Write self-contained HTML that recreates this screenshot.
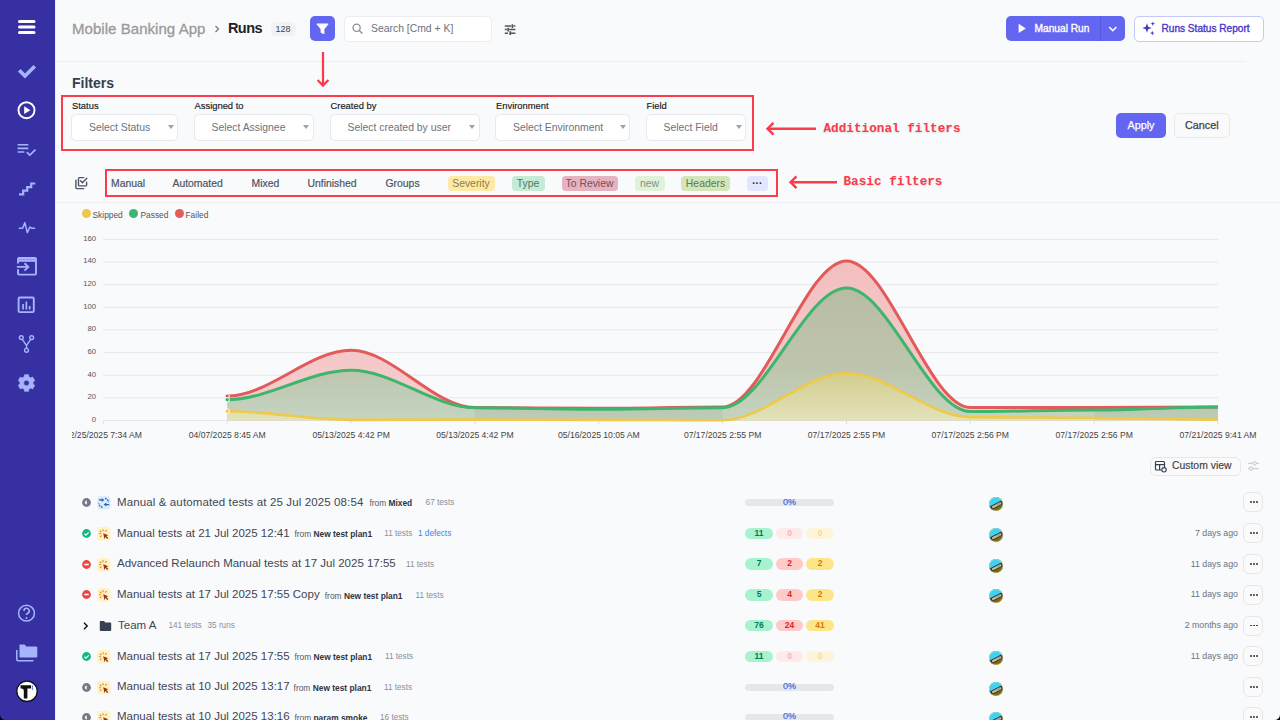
<!DOCTYPE html>
<html><head><meta charset="utf-8">
<style>
*{box-sizing:border-box;margin:0;padding:0}
html,body{width:1280px;height:720px;overflow:hidden;background:#f9fafb;font-family:"Liberation Sans",sans-serif;color:#374151}
.a{position:absolute}
.nw{white-space:nowrap}
#sb{left:0;top:0;width:56px;height:720px;background:#3730a3;border-right:1px solid #eef0fb}
#sb svg{position:absolute}
.hdrline{left:55px;top:61px;width:1191px;height:1px;background:#eceef1}
.sel{background:#fff;border:1px solid #e8e9ec;border-radius:5px;height:26px}
.sel span{position:absolute;left:16.6px;top:7.3px;font-size:10.4px;color:#6b7280;white-space:nowrap}
.sel i{position:absolute;right:3.6px;top:10.6px;width:0;height:0;border-left:3.3px solid transparent;border-right:3.3px solid transparent;border-top:4.6px solid #9ca3af}
.lbl{font-size:9.4px;color:#16181c;top:100px;-webkit-text-stroke:.15px #16181c}
.redbox{border:2.3px solid #fb3a4c}
.tab{font-size:10.4px;color:#4b5563;top:177.5px;-webkit-text-stroke:.2px #4b5563;white-space:nowrap}
.pill{top:175.5px;height:15px;border-radius:4px;font-size:10.4px;line-height:15px;text-align:center;white-space:nowrap}
.ann{font-family:"Liberation Mono",monospace;font-weight:bold;font-size:12.7px;color:#fb3a4c;white-space:nowrap;text-shadow:0 1px 2px rgba(0,0,0,.12)}
.ylab{font-size:7.7px;color:#555;text-align:right;width:30px;left:66px}
.xlab{font-size:8.6px;color:#444;white-space:nowrap;top:5px;text-align:center;width:120px}
.row{left:0;width:1280px;height:30px}
.title{font-size:11.5px;color:#3f4654;white-space:nowrap}
.from{font-size:8.4px;color:#555b66;white-space:nowrap}
.from b{color:#2f3542}
.cnt{font-size:8.2px;color:#8a8f98;white-space:nowrap}
.ago{font-size:8.8px;color:#6b7280;white-space:nowrap;text-align:right;width:100px;left:1138px}
.dots{left:1243px;width:20px;height:20px;border:1px solid #e6e7ea;border-radius:6px;background:#fafafa}
.dots:after{content:"";position:absolute;left:6px;top:8.2px;width:1.8px;height:1.8px;background:#333;border-radius:1px;box-shadow:3px 0 0 #333,6px 0 0 #333}
.prog{left:745px;width:89px;height:7px;border-radius:4px;background:#e5e7eb}
.prog span{position:absolute;left:0;width:100%;top:-1.2px;text-align:center;font-size:9px;color:#4a6fe0;line-height:9px;-webkit-text-stroke:.25px #4a6fe0}
.st{left:745px;width:89px;height:11.5px}
.st div{position:absolute;top:0;height:11.5px;border-radius:6px;font-size:8.5px;font-weight:bold;line-height:11.5px;text-align:center}
.st .g{left:0;width:28px;background:#a7f3d0;color:#047857}
.st .r{left:31px;width:27px;background:#fecaca;color:#dc2626}
.st .y{left:61px;width:28px;background:#fde68a;color:#d97706}
.st .rz{left:31px;width:27px;background:#fdeaea;color:#f9b4b4}
.st .yz{left:61px;width:28px;background:#fcf5d9;color:#f6d7a0}
</style></head><body>
<!-- SIDEBAR -->
<div id="sb" class="a">
<svg class="a" style="left:0;top:0" width="55" height="720" viewBox="0 0 55 720">
<g fill="none" stroke="#fff" stroke-width="3" stroke-linecap="round">
<path d="M19.5 21.5H34M19.5 27H34M19.5 32.5H34"/>
</g>
<path d="M20.5 71.5l4.5 4.5 8.5-8.5" fill="none" stroke="#a5b4fc" stroke-width="3.6" stroke-linecap="square"/>
<circle cx="26.5" cy="110.2" r="8" fill="none" stroke="#fff" stroke-width="1.9"/>
<path d="M24.2 106.3v7.8l6.2-3.9z" fill="#fff"/>
<g fill="none" stroke="#a5b4fc" stroke-width="1.6">
<path d="M17.6 144.8h10.7M17.6 148.4h10.7M17.6 152h6.8"/>
<path d="M26.8 152.2l3 2.8 5.7-5.4" stroke-width="1.7"/>
</g>
<path d="M19 194.3h4.2v-3.6h4v-3.6h4v-3.6h4" fill="none" stroke="#a5b4fc" stroke-width="2.2"/>
<path d="M18.8 228.2h3.8l2.3-5.6 2.4 10 2.6-5.6 1.8 1.2h3.4" fill="none" stroke="#a5b4fc" stroke-width="1.5" stroke-linejoin="round"/>
<g fill="none" stroke="#a5b4fc" stroke-width="1.9">
<path d="M18 263.5v-4.5q0-1 1-1h16q1 0 1 1v14.6q0 1-1 1H19q-1 0-1-1v-4.3"/>
<path d="M18 260.5h18" stroke-width="2.6"/>
<path d="M16.9 266.9h11M24.5 263.2l3.8 3.7-3.8 3.7"/>
<rect x="18.6" y="297.5" width="15.2" height="14.6" rx="1.2"/>
</g>
<g fill="#a5b4fc"><rect x="22.2" y="304" width="1.7" height="5.5"/><rect x="25.5" y="301.5" width="1.7" height="8"/><rect x="28.8" y="306" width="1.7" height="3.5"/></g>
<g fill="none" stroke="#a5b4fc" stroke-width="1.4">
<circle cx="21.3" cy="337.6" r="1.9"/><circle cx="31.7" cy="337.6" r="1.9"/><circle cx="26.5" cy="350.3" r="1.9"/>
<path d="M22.3 339.3l4.2 6.2 4.2-6.2M26.5 345.5v2.9"/>
</g>
<path fill="#a5b4fc" fill-rule="evenodd" stroke="#a5b4fc" stroke-width=".6" stroke-linejoin="round" d="M24.24 376.80L24.42 374.66L28.58 374.66L28.76 376.80A6.6 6.6 0 0 1 30.74 377.94L32.69 377.03L34.77 380.63L33.00 381.85A6.6 6.6 0 0 1 33.00 384.15L34.77 385.37L32.69 388.97L30.74 388.06A6.6 6.6 0 0 1 28.76 389.20L28.58 391.34L24.42 391.34L24.24 389.20A6.6 6.6 0 0 1 22.26 388.06L20.31 388.97L18.23 385.37L20.00 384.15A6.6 6.6 0 0 1 20.00 381.85L18.23 380.63L20.31 377.03L22.26 377.94A6.6 6.6 0 0 1 24.24 376.80Z M29.3 383.0A2.8 2.8 0 1 0 23.7 383.0A2.8 2.8 0 1 0 29.3 383.0Z"/>
<circle cx="26.5" cy="613.2" r="7.9" fill="none" stroke="#a5b4fc" stroke-width="1.5"/>
<path d="M24 611a2.6 2.6 0 1 1 3.6 2.3c-.8.4-1.1.9-1.1 1.8" fill="none" stroke="#a5b4fc" stroke-width="1.6"/>
<circle cx="26.5" cy="618" r="1" fill="#a5b4fc"/>
<path d="M19.5 644.5h5l1.8 2h10q1 0 1 1v9q0 1-1 1H20.5q-1 0-1-1z" fill="#a5b4fc"/>
<path d="M16.8 650v9.5q0 1.2 1.2 1.2h15.5" fill="none" stroke="#a5b4fc" stroke-width="1.5"/>
<circle cx="27" cy="691.3" r="10.2" fill="#fff" stroke="#111" stroke-width="1.3"/>
<path d="M20.5 685.2h10.5v3.2h-3.6v10h-3.6v-7.6q0-2.4-2.4-2.4h-.9z" fill="#111"/>
<rect x="31.8" y="685.2" width="1.2" height="4.8" fill="#5b8def"/>
</svg>
</div>
<div class="a hdrline"></div>
<!-- HEADER -->
<div class="a nw" style="left:72px;top:19.5px;font-size:15px;color:#999;letter-spacing:.05px;-webkit-text-stroke:.3px #999">Mobile Banking App</div>
<svg class="a" style="left:213px;top:24px" width="8" height="10"><path d="M2.5 2l3 3-3 3" fill="none" stroke="#777" stroke-width="1.2"/></svg>
<div class="a nw" style="left:228px;top:19.5px;font-size:14.5px;font-weight:bold;color:#1f2125;letter-spacing:-.6px">Runs</div>
<div class="a" style="left:270.5px;top:21.5px;width:25px;height:14px;border-radius:5px;background:#f1f2f4;font-size:9px;color:#3b4350;text-align:center;line-height:14px">128</div>
<div class="a" style="left:309.5px;top:16px;width:25px;height:25px;border-radius:5px;background:#6366f1"></div>
<svg class="a" style="left:309.5px;top:16px" width="25" height="25"><path d="M7.2 8.2h10.6l-4 4.6v4.6l-2.6-1.2v-3.4z" fill="#fff" stroke="#fff" stroke-width="1.2" stroke-linejoin="round"/></svg>
<div class="a" style="left:343.5px;top:15.5px;width:148px;height:26px;border-radius:5px;background:#fff;border:1px solid #ecedf0"></div>
<svg class="a" style="left:350px;top:21px" width="16" height="16"><circle cx="6.6" cy="6.8" r="3.6" fill="none" stroke="#8b919b" stroke-width="1.3"/><path d="M9.3 9.5l3 3" stroke="#8b919b" stroke-width="1.4"/></svg>
<div class="a nw" style="left:371px;top:23px;font-size:10.4px;color:#6b7280">Search [Cmd + K]</div>
<svg class="a" style="left:503px;top:22px" width="16" height="14"><g stroke="#4b5563" stroke-width="1.5"><path d="M1.8 4.1h6.4M10.6 4.1h1.8M1.8 7.6h2M6.2 7.6h6.2M1.8 11.2h3.2M8 11.2h4.4"/><path d="M9.4 2.2v3.8M5.1 5.7v3.8M7.2 9.3v3.8" stroke-width="1.7"/></g></svg>

<div class="a" style="left:1006px;top:16px;width:119px;height:25px;border-radius:5px;background:#6366f1"></div>
<div class="a" style="left:1099.5px;top:16px;width:1px;height:25px;background:#5659e0"></div>
<svg class="a" style="left:1016px;top:22px" width="12" height="14"><path d="M2.6 1.8v9.2l7.2-4.6z" fill="#fff"/></svg>
<div class="a nw" style="left:1034.5px;top:23.2px;font-size:10.2px;color:#fff;-webkit-text-stroke:.35px #fff">Manual Run</div>
<svg class="a" style="left:1106px;top:24px" width="14" height="10"><path d="M3.2 3l3.6 3.6 3.6-3.6" fill="none" stroke="#fff" stroke-width="1.5"/></svg>
<div class="a" style="left:1133.5px;top:16px;width:130px;height:25.5px;border-radius:5px;background:#fff;border:1px solid #c5c9f6"></div>
<svg class="a" style="left:1140px;top:20px" width="17" height="17"><g fill="#4338ca"><path d="M7 3.2l1.2 3.5 3.5 1.3-3.5 1.2L7 12.7 5.8 9.2 2.3 8l3.5-1.3z"/><path d="M12.8 1.5l.6 1.6 1.6.6-1.6.6-.6 1.6-.6-1.6-1.6-.6 1.6-.6z"/><path d="M12.3 10.8l.6 1.7 1.7.6-1.7.6-.6 1.7-.6-1.7-1.7-.6 1.7-.6z"/></g></svg>
<div class="a nw" style="left:1161.5px;top:23.3px;font-size:10.1px;color:#4338ca;-webkit-text-stroke:.35px #4338ca">Runs Status Report</div>

<!-- FILTERS -->
<svg class="a" style="left:311.3px;top:50px" width="24" height="40"><path d="M12 2v34" stroke="#fb3a4c" stroke-width="2.2"/><path d="M6.6 30l5.4 5.6 5.4-5.6" fill="none" stroke="#fb3a4c" stroke-width="2.2"/></svg>
<div class="a nw" style="left:72px;top:75px;font-size:14px;font-weight:bold;color:#344050">Filters</div>
<div class="a redbox" style="left:61px;top:95.2px;width:692.5px;height:56.2px"></div>
<div class="a lbl nw" style="left:72px">Status</div>
<div class="a lbl nw" style="left:194.5px">Assigned to</div>
<div class="a lbl nw" style="left:330.5px">Created by</div>
<div class="a lbl nw" style="left:496px">Environment</div>
<div class="a lbl nw" style="left:646.5px">Field</div>
<div class="a sel" style="left:71.4px;top:113.9px;width:106.8px;height:27px"><span>Select Status</span><i></i></div>
<div class="a sel" style="left:193.9px;top:113.9px;width:119.8px;height:27px"><span>Select Assignee</span><i></i></div>
<div class="a sel" style="left:329.9px;top:113.9px;width:149.8px;height:27px"><span>Select created by user</span><i></i></div>
<div class="a sel" style="left:495.4px;top:113.9px;width:134.8px;height:27px"><span>Select Environment</span><i></i></div>
<div class="a sel" style="left:645.9px;top:113.9px;width:100.3px;height:27px"><span>Select Field</span><i></i></div>
<svg class="a" style="left:762px;top:118px" width="58" height="22"><path d="M6 10.7h48" stroke="#fb3a4c" stroke-width="2.4"/><path d="M11.5 4.8L5.5 10.7l6 6" fill="none" stroke="#fb3a4c" stroke-width="2.4"/></svg>
<div class="a ann" style="left:823.5px;top:120.5px">Additional filters</div>
<div class="a" style="left:1116px;top:113px;width:50px;height:25px;border-radius:5px;background:#6366f1;color:#fff;font-size:10.8px;text-align:center;line-height:25px;-webkit-text-stroke:.25px #fff">Apply</div>
<div class="a" style="left:1174px;top:113px;width:55.5px;height:25px;border-radius:5px;background:#fafafa;border:1px solid #e8e9ec;color:#404246;font-size:10.8px;text-align:center;line-height:23.5px;-webkit-text-stroke:.25px #404246">Cancel</div>

<!-- BASIC FILTERS -->
<svg class="a" style="left:73px;top:174px" width="17" height="17"><g fill="none" stroke="#4b5563" stroke-width="1.4" stroke-linecap="round"><path d="M2.9 6.3v7.3q0 1 1 1h6.8"/><path d="M10.7 3.6H6.5q-1 0-1 1v6.3q0 1 1 1h6.1q1 0 1-1V8.3"/><path d="M7.5 6.7l2 2.1 4.3-4.6"/></g></svg>
<div class="a redbox" style="left:104.5px;top:169.3px;width:673px;height:27.3px"></div>
<div class="a tab" style="left:111px">Manual</div>
<div class="a tab" style="left:172.5px">Automated</div>
<div class="a tab" style="left:251.5px">Mixed</div>
<div class="a tab" style="left:307.5px">Unfinished</div>
<div class="a tab" style="left:385.5px">Groups</div>
<div class="a pill" style="left:447.5px;width:47px;background:#fde9a8;color:#8f7d3c">Severity</div>
<div class="a pill" style="left:511.5px;width:33px;background:#c5ead6;color:#4f7a62">Type</div>
<div class="a pill" style="left:561.5px;width:56px;background:#e6b3c0;color:#7a4d58">To Review</div>
<div class="a pill" style="left:634.5px;width:30px;background:#e0f2da;color:#7c967c">new</div>
<div class="a pill" style="left:681px;width:49px;background:#d3e6b9;color:#5d7750">Headers</div>
<div class="a pill" style="left:746.5px;width:21.5px;height:15.5px;background:#e0e7ff;color:#222;font-size:10px;line-height:15px;font-weight:bold">&middot;&middot;&middot;</div>
<svg class="a" style="left:785px;top:172px" width="58" height="22"><path d="M6 10.2h46" stroke="#fb3a4c" stroke-width="2.4"/><path d="M11.5 4.3L5.5 10.2l6 6" fill="none" stroke="#fb3a4c" stroke-width="2.4"/></svg>
<div class="a ann" style="left:843.5px;top:174.3px">Basic filters</div>
<div class="a" style="left:55px;top:202px;width:1225px;height:1px;background:#eff0f2"></div>


<!-- LEGEND -->
<div class="a" style="left:81.8px;top:208.9px;width:9px;height:9px;border-radius:50%;background:#ecc94b"></div>
<div class="a nw" style="left:92.5px;top:210px;font-size:8.4px;color:#555">Skipped</div>
<div class="a" style="left:129.4px;top:208.9px;width:9px;height:9px;border-radius:50%;background:#3fb46f"></div>
<div class="a nw" style="left:140.5px;top:210px;font-size:8.4px;color:#555">Passed</div>
<div class="a" style="left:174.8px;top:208.9px;width:9px;height:9px;border-radius:50%;background:#e15d5d"></div>
<div class="a nw" style="left:185.5px;top:210px;font-size:8.4px;color:#555">Failed</div>
<!-- CHART -->
<svg class="a" style="left:0;top:0" width="1280" height="450">
<defs>
<linearGradient id="gr" x1="0" y1="255" x2="0" y2="420" gradientUnits="userSpaceOnUse"><stop offset="0" stop-color="#f2b6b6"/><stop offset="1" stop-color="#f4c8c8"/></linearGradient>
<linearGradient id="gg" x1="0" y1="285" x2="0" y2="420" gradientUnits="userSpaceOnUse"><stop offset="0" stop-color="#b3bba1"/><stop offset=".62" stop-color="#b8c4aa"/><stop offset="1" stop-color="#bfd5bf"/></linearGradient>
<linearGradient id="gy" x1="0" y1="372" x2="0" y2="420" gradientUnits="userSpaceOnUse"><stop offset="0" stop-color="#d5cd89"/><stop offset="1" stop-color="#e6e3b9"/></linearGradient>
<clipPath id="cl"><rect x="72" y="200" width="1200" height="240"/></clipPath>
</defs>
<path d="M103.4 420.5H1218" stroke="#e6e7ea" stroke-width="1"/><path d="M103.4 397.9H1218" stroke="#e6e7ea" stroke-width="1"/><path d="M103.4 375.2H1218" stroke="#e6e7ea" stroke-width="1"/><path d="M103.4 352.6H1218" stroke="#e6e7ea" stroke-width="1"/><path d="M103.4 329.9H1218" stroke="#e6e7ea" stroke-width="1"/><path d="M103.4 307.3H1218" stroke="#e6e7ea" stroke-width="1"/><path d="M103.4 284.7H1218" stroke="#e6e7ea" stroke-width="1"/><path d="M103.4 262.0H1218" stroke="#e6e7ea" stroke-width="1"/><path d="M103.4 239.4H1218" stroke="#e6e7ea" stroke-width="1"/><path d="M103.4 420.5V424.5" stroke="#e0e1e4" stroke-width="1"/><path d="M227.2 420.5V424.5" stroke="#e0e1e4" stroke-width="1"/><path d="M351.1 420.5V424.5" stroke="#e0e1e4" stroke-width="1"/><path d="M474.9 420.5V424.5" stroke="#e0e1e4" stroke-width="1"/><path d="M598.8 420.5V424.5" stroke="#e0e1e4" stroke-width="1"/><path d="M722.6 420.5V424.5" stroke="#e0e1e4" stroke-width="1"/><path d="M846.5 420.5V424.5" stroke="#e0e1e4" stroke-width="1"/><path d="M970.3 420.5V424.5" stroke="#e0e1e4" stroke-width="1"/><path d="M1094.2 420.5V424.5" stroke="#e0e1e4" stroke-width="1"/><path d="M1218.0 420.5V424.5" stroke="#e0e1e4" stroke-width="1"/>
<path d="M227.2,396.1 C268.5,396.1 309.8,350.3 351.1,350.3 C392.4,350.3 433.7,407.5 474.9,407.5 C516.2,407.5 557.5,408.3 598.8,408.3 C640.1,408.3 681.4,407.1 722.6,407.1 C763.9,407.1 805.2,260.9 846.5,260.9 C887.8,260.9 929.1,407.5 970.3,407.5 C1011.6,407.5 1052.9,407.5 1094.2,407.5 C1135.5,407.5 1176.8,406.9 1218.0,406.9 L1218.0,420.5 L227.2,420.5 Z" fill="url(#gr)" fill-opacity=".88"/>
<path d="M227.2,399.7 C268.5,399.7 309.8,370.2 351.1,370.2 C392.4,370.2 433.7,407.7 474.9,407.7 C516.2,407.7 557.5,409.2 598.8,409.2 C640.1,409.2 681.4,407.7 722.6,407.7 C763.9,407.7 805.2,288.1 846.5,288.1 C887.8,288.1 929.1,411.6 970.3,411.6 C1011.6,411.6 1052.9,410.1 1094.2,410.1 C1135.5,410.1 1176.8,407.1 1218.0,407.1 L1218.0,420.5 L227.2,420.5 Z" fill="url(#gg)" fill-opacity=".9"/>
<path d="M227.2,411.2 C268.5,411.2 309.8,419.9 351.1,419.9 C392.4,419.9 433.7,419.6 474.9,419.6 C516.2,419.6 557.5,419.9 598.8,419.9 C640.1,419.9 681.4,420.2 722.6,420.2 C763.9,420.2 805.2,373.2 846.5,373.2 C887.8,373.2 929.1,417.1 970.3,417.1 C1011.6,417.1 1052.9,418.0 1094.2,418.0 C1135.5,418.0 1176.8,419.6 1218.0,419.6 L1218.0,420.5 L227.2,420.5 Z" fill="url(#gy)" fill-opacity=".9"/>
<clipPath id="gcl"><path d="M227.2,399.7 C268.5,399.7 309.8,370.2 351.1,370.2 C392.4,370.2 433.7,407.7 474.9,407.7 C516.2,407.7 557.5,409.2 598.8,409.2 C640.1,409.2 681.4,407.7 722.6,407.7 C763.9,407.7 805.2,288.1 846.5,288.1 C887.8,288.1 929.1,411.6 970.3,411.6 C1011.6,411.6 1052.9,410.1 1094.2,410.1 C1135.5,410.1 1176.8,407.1 1218.0,407.1 L1218.0,420.5 L227.2,420.5 Z"/></clipPath><g clip-path="url(#gcl)"><path d="M474.9 400H722.6V420.5H474.9Z M1094.2 400H1218V420.5H1094.2Z" fill="#6b6b50" fill-opacity=".08"/></g>

<path d="M227.2,396.1 C268.5,396.1 309.8,350.3 351.1,350.3 C392.4,350.3 433.7,407.5 474.9,407.5 C516.2,407.5 557.5,408.3 598.8,408.3 C640.1,408.3 681.4,407.1 722.6,407.1 C763.9,407.1 805.2,260.9 846.5,260.9 C887.8,260.9 929.1,407.5 970.3,407.5 C1011.6,407.5 1052.9,407.5 1094.2,407.5 C1135.5,407.5 1176.8,406.9 1218.0,406.9" fill="none" stroke="#e35a5a" stroke-width="3"/>
<path d="M227.2,399.7 C268.5,399.7 309.8,370.2 351.1,370.2 C392.4,370.2 433.7,407.7 474.9,407.7 C516.2,407.7 557.5,409.2 598.8,409.2 C640.1,409.2 681.4,407.7 722.6,407.7 C763.9,407.7 805.2,288.1 846.5,288.1 C887.8,288.1 929.1,411.6 970.3,411.6 C1011.6,411.6 1052.9,410.1 1094.2,410.1 C1135.5,410.1 1176.8,407.1 1218.0,407.1" fill="none" stroke="#3db56d" stroke-width="3"/>
<path d="M227.2,411.2 C268.5,411.2 309.8,419.9 351.1,419.9 C392.4,419.9 433.7,419.6 474.9,419.6 C516.2,419.6 557.5,419.9 598.8,419.9 C640.1,419.9 681.4,420.2 722.6,420.2 C763.9,420.2 805.2,373.2 846.5,373.2 C887.8,373.2 929.1,417.1 970.3,417.1 C1011.6,417.1 1052.9,418.0 1094.2,418.0 C1135.5,418.0 1176.8,419.6 1218.0,419.6" fill="none" stroke="#efc94a" stroke-width="2.6"/>
<circle cx="227.2" cy="396.1" r="2.2" fill="#e15757" stroke="#fff" stroke-width="1"/>
<circle cx="227.2" cy="399.7" r="2.2" fill="#3cb46c" stroke="#fff" stroke-width="1"/>
<circle cx="227.2" cy="411.2" r="2.2" fill="#efc94a" stroke="#fff" stroke-width="1"/>
</svg>
<div class="a ylab" style="top:414.9px">0</div><div class="a ylab" style="top:392.3px">20</div><div class="a ylab" style="top:369.6px">40</div><div class="a ylab" style="top:347.0px">60</div><div class="a ylab" style="top:324.3px">80</div><div class="a ylab" style="top:301.7px">100</div><div class="a ylab" style="top:279.1px">120</div><div class="a ylab" style="top:256.4px">140</div><div class="a ylab" style="top:233.8px">160</div>
<div class="a" style="left:72px;top:425px;width:1200px;height:20px;overflow:hidden">
<div class="a" style="left:-72px;top:0;width:1300px;height:20px"><div class="a xlab" style="left:43.4px">02/25/2025 7:34 AM</div><div class="a xlab" style="left:167.2px">04/07/2025 8:45 AM</div><div class="a xlab" style="left:291.1px">05/13/2025 4:42 PM</div><div class="a xlab" style="left:414.9px">05/13/2025 4:42 PM</div><div class="a xlab" style="left:538.8px">05/16/2025 10:05 AM</div><div class="a xlab" style="left:662.6px">07/17/2025 2:55 PM</div><div class="a xlab" style="left:786.5px">07/17/2025 2:55 PM</div><div class="a xlab" style="left:910.3px">07/17/2025 2:56 PM</div><div class="a xlab" style="left:1034.2px">07/17/2025 2:56 PM</div><div class="a xlab" style="left:1158.0px">07/21/2025 9:41 AM</div></div>
</div>


<!-- LIST -->
<div class="a" style="left:1149.5px;top:456.5px;width:91px;height:19.5px;border-radius:6px;border:1px solid #e6e7ea;background:#fafafa"></div>
<svg class="a" style="left:1154px;top:460px" width="13" height="13"><g fill="none" stroke="#374151" stroke-width="1.2"><rect x="1.5" y="1.5" width="9" height="8.5" rx="1"/><path d="M1.5 4.6h9M5.6 4.6v5.4"/></g><circle cx="10" cy="9.8" r="2.2" fill="#fafafa" stroke="#374151" stroke-width="1.1"/></svg>
<div class="a nw" style="left:1172px;top:460.3px;font-size:10.4px;color:#3f4146;-webkit-text-stroke:.15px #3f4146">Custom view</div>
<svg class="a" style="left:1247px;top:460px" width="12" height="12"><g fill="none" stroke="#c4c6cc" stroke-width="1"><path d="M1 3.3h11M1 8.6h11"/><circle cx="7.6" cy="3.3" r="1.7" fill="#f9fafb"/><circle cx="4.2" cy="8.6" r="1.7" fill="#f9fafb"/></g></svg>
<svg class="a" style="left:81px;top:496.7px" width="11" height="11"><circle cx="5.5" cy="5.5" r="4.4" fill="#747a86"/><path d="M5.9 3.4a2.1 2.1 0 0 0 0 4.2z" fill="#eef0f3"/></svg><svg class="a" style="left:97px;top:495.7px" width="14" height="14"><rect x="0" y="0" width="13.5" height="13.5" rx="3.2" fill="#dcecfd"/><g fill="none" stroke="#2a64b8" stroke-width="1.3"><path d="M1.9 3.9h3.6M12.2 8.6H8.6"/><path d="M8 2.3a4.6 4.6 0 0 1 3.6 4" stroke-dasharray="1.7 .8"/><path d="M5.5 11.3a4.6 4.6 0 0 1-3.6-4" stroke-dasharray="1.7 .8"/></g><path d="M7.4 3.9L4.6 1.9v4z M6.6 8.6l2.8-2v4z" fill="#2a64b8"/></svg><div class="a title" style="left:117px;top:495.5px;letter-spacing:.12px">Manual &amp; automated tests at 25 Jul 2025 08:54</div><div class="a from" style="left:369.4px;top:498.0px">from <b>Mixed</b></div><div class="a prog" style="top:498.7px"><span>0%</span></div><svg class="a" style="left:989px;top:496.7px" width="14" height="14"><defs><clipPath id="avc503"><circle cx="7" cy="7" r="7"/></clipPath></defs><g clip-path="url(#avc503)"><rect width="14" height="14" fill="#7a6d00"/><path d="M0 0h14v3.5L0 10z" fill="#3fd3f0"/><path d="M.8 9.4L12.2 3.6l1.9 3.6L2.6 13z" fill="#2e2e2e"/><path d="M2.6 9.5l8.9-4.5 1.1 2.1-8.9 4.5z" fill="#cdb99c"/><path d="M7.5 7l2.8-1.4 1 2-2.8 1.4z" fill="#7aa6d8"/></g><circle cx="7" cy="7" r="6.6" fill="none" stroke="#fff" stroke-opacity=".35" stroke-width=".8"/></svg><div class="a dots" style="top:492.2px"></div><svg class="a" style="left:81px;top:527.7px" width="11" height="11"><circle cx="5.5" cy="5.5" r="4.4" fill="#10b981"/><path d="M3.4 5.6l1.5 1.5 2.8-2.8" fill="none" stroke="#fff" stroke-width="1.2"/></svg><svg class="a" style="left:97px;top:526.7px" width="14" height="14"><rect x="0" y="0" width="13.5" height="13.5" rx="3" fill="#fef3c7"/><g stroke="#ea7a12" stroke-width="1.1" stroke-linecap="round"><path d="M6 2.6v1.2M3.2 4l.8.8M2.5 6.8h1.2M3.3 9.6l.8-.7M8.6 4.2l.7-.8"/></g><path d="M6.2 6.3l5.2 2-2.1.8 2 2-1 1-2-2-.8 2.1z" fill="#9a3412"/></svg><div class="a title" style="left:117px;top:526.5px">Manual tests at 21 Jul 2025 12:41</div><div class="a from" style="left:294.4px;top:529.0px">from <b>New test plan1</b></div><div class="a st" style="top:527.5px"><div class="g">11</div><div class="rz">0</div><div class="yz">0</div></div><svg class="a" style="left:989px;top:527.7px" width="14" height="14"><defs><clipPath id="avc534"><circle cx="7" cy="7" r="7"/></clipPath></defs><g clip-path="url(#avc534)"><rect width="14" height="14" fill="#7a6d00"/><path d="M0 0h14v3.5L0 10z" fill="#3fd3f0"/><path d="M.8 9.4L12.2 3.6l1.9 3.6L2.6 13z" fill="#2e2e2e"/><path d="M2.6 9.5l8.9-4.5 1.1 2.1-8.9 4.5z" fill="#cdb99c"/><path d="M7.5 7l2.8-1.4 1 2-2.8 1.4z" fill="#7aa6d8"/></g><circle cx="7" cy="7" r="6.6" fill="none" stroke="#fff" stroke-opacity=".35" stroke-width=".8"/></svg><div class="a ago" style="top:527.7px">7 days ago</div><div class="a dots" style="top:523.2px"></div><svg class="a" style="left:81px;top:558.5px" width="11" height="11"><circle cx="5.5" cy="5.5" r="4.4" fill="#ef4444"/><path d="M3.3 5.5h4.4" stroke="#fff" stroke-width="1.6"/></svg><svg class="a" style="left:97px;top:557.5px" width="14" height="14"><rect x="0" y="0" width="13.5" height="13.5" rx="3" fill="#fef3c7"/><g stroke="#ea7a12" stroke-width="1.1" stroke-linecap="round"><path d="M6 2.6v1.2M3.2 4l.8.8M2.5 6.8h1.2M3.3 9.6l.8-.7M8.6 4.2l.7-.8"/></g><path d="M6.2 6.3l5.2 2-2.1.8 2 2-1 1-2-2-.8 2.1z" fill="#9a3412"/></svg><div class="a title" style="left:117px;top:557.3px">Advanced Relaunch Manual tests at 17 Jul 2025 17:55</div><div class="a st" style="top:558.3px"><div class="g">7</div><div class="r">2</div><div class="y">2</div></div><svg class="a" style="left:989px;top:558.5px" width="14" height="14"><defs><clipPath id="avc565"><circle cx="7" cy="7" r="7"/></clipPath></defs><g clip-path="url(#avc565)"><rect width="14" height="14" fill="#7a6d00"/><path d="M0 0h14v3.5L0 10z" fill="#3fd3f0"/><path d="M.8 9.4L12.2 3.6l1.9 3.6L2.6 13z" fill="#2e2e2e"/><path d="M2.6 9.5l8.9-4.5 1.1 2.1-8.9 4.5z" fill="#cdb99c"/><path d="M7.5 7l2.8-1.4 1 2-2.8 1.4z" fill="#7aa6d8"/></g><circle cx="7" cy="7" r="6.6" fill="none" stroke="#fff" stroke-opacity=".35" stroke-width=".8"/></svg><div class="a ago" style="top:558.5px">11 days ago</div><div class="a dots" style="top:554.0px"></div><svg class="a" style="left:81px;top:589.3px" width="11" height="11"><circle cx="5.5" cy="5.5" r="4.4" fill="#ef4444"/><path d="M3.3 5.5h4.4" stroke="#fff" stroke-width="1.6"/></svg><svg class="a" style="left:97px;top:588.3px" width="14" height="14"><rect x="0" y="0" width="13.5" height="13.5" rx="3" fill="#fef3c7"/><g stroke="#ea7a12" stroke-width="1.1" stroke-linecap="round"><path d="M6 2.6v1.2M3.2 4l.8.8M2.5 6.8h1.2M3.3 9.6l.8-.7M8.6 4.2l.7-.8"/></g><path d="M6.2 6.3l5.2 2-2.1.8 2 2-1 1-2-2-.8 2.1z" fill="#9a3412"/></svg><div class="a title" style="left:117px;top:588.1px">Manual tests at 17 Jul 2025 17:55 Copy</div><div class="a from" style="left:324.8px;top:590.6px">from <b>New test plan1</b></div><div class="a st" style="top:589.1px"><div class="g">5</div><div class="r">4</div><div class="y">2</div></div><svg class="a" style="left:989px;top:589.3px" width="14" height="14"><defs><clipPath id="avc596"><circle cx="7" cy="7" r="7"/></clipPath></defs><g clip-path="url(#avc596)"><rect width="14" height="14" fill="#7a6d00"/><path d="M0 0h14v3.5L0 10z" fill="#3fd3f0"/><path d="M.8 9.4L12.2 3.6l1.9 3.6L2.6 13z" fill="#2e2e2e"/><path d="M2.6 9.5l8.9-4.5 1.1 2.1-8.9 4.5z" fill="#cdb99c"/><path d="M7.5 7l2.8-1.4 1 2-2.8 1.4z" fill="#7aa6d8"/></g><circle cx="7" cy="7" r="6.6" fill="none" stroke="#fff" stroke-opacity=".35" stroke-width=".8"/></svg><div class="a ago" style="top:589.3px">11 days ago</div><div class="a dots" style="top:584.8px"></div><svg class="a" style="left:81px;top:620.5px" width="10" height="10"><path d="M3 1.8l3.2 3.2L3 8.2" fill="none" stroke="#111" stroke-width="1.4"/></svg><svg class="a" style="left:99px;top:619.5px" width="13" height="12"><path d="M.8 1.8q0-.8.8-.8h3.4l1.4 1.6h5q.8 0 .8.8v6.7q0 .8-.8.8H1.6q-.8 0-.8-.8z" fill="#374151"/></svg><div class="a title" style="left:118px;top:618.8px">Team A</div><div class="a cnt" style="left:168.4px;top:621.3px">141 tests</div><div class="a cnt" style="left:207.5px;top:621.3px">35 runs</div><div class="a st" style="top:619.5px"><div class="g">76</div><div class="r">24</div><div class="y">41</div></div><div class="a ago" style="top:620.0px">2 months ago</div><div class="a dots" style="top:615.5px"></div><svg class="a" style="left:81px;top:650.7px" width="11" height="11"><circle cx="5.5" cy="5.5" r="4.4" fill="#10b981"/><path d="M3.4 5.6l1.5 1.5 2.8-2.8" fill="none" stroke="#fff" stroke-width="1.2"/></svg><svg class="a" style="left:97px;top:649.7px" width="14" height="14"><rect x="0" y="0" width="13.5" height="13.5" rx="3" fill="#fef3c7"/><g stroke="#ea7a12" stroke-width="1.1" stroke-linecap="round"><path d="M6 2.6v1.2M3.2 4l.8.8M2.5 6.8h1.2M3.3 9.6l.8-.7M8.6 4.2l.7-.8"/></g><path d="M6.2 6.3l5.2 2-2.1.8 2 2-1 1-2-2-.8 2.1z" fill="#9a3412"/></svg><div class="a title" style="left:117px;top:649.5px">Manual tests at 17 Jul 2025 17:55</div><div class="a from" style="left:294.4px;top:652.0px">from <b>New test plan1</b></div><div class="a st" style="top:650.5px"><div class="g">11</div><div class="rz">0</div><div class="yz">0</div></div><svg class="a" style="left:989px;top:650.7px" width="14" height="14"><defs><clipPath id="avc657"><circle cx="7" cy="7" r="7"/></clipPath></defs><g clip-path="url(#avc657)"><rect width="14" height="14" fill="#7a6d00"/><path d="M0 0h14v3.5L0 10z" fill="#3fd3f0"/><path d="M.8 9.4L12.2 3.6l1.9 3.6L2.6 13z" fill="#2e2e2e"/><path d="M2.6 9.5l8.9-4.5 1.1 2.1-8.9 4.5z" fill="#cdb99c"/><path d="M7.5 7l2.8-1.4 1 2-2.8 1.4z" fill="#7aa6d8"/></g><circle cx="7" cy="7" r="6.6" fill="none" stroke="#fff" stroke-opacity=".35" stroke-width=".8"/></svg><div class="a ago" style="top:650.7px">11 days ago</div><div class="a dots" style="top:646.2px"></div><svg class="a" style="left:81px;top:681.5px" width="11" height="11"><circle cx="5.5" cy="5.5" r="4.4" fill="#747a86"/><path d="M5.9 3.4a2.1 2.1 0 0 0 0 4.2z" fill="#eef0f3"/></svg><svg class="a" style="left:97px;top:680.5px" width="14" height="14"><rect x="0" y="0" width="13.5" height="13.5" rx="3" fill="#fef3c7"/><g stroke="#ea7a12" stroke-width="1.1" stroke-linecap="round"><path d="M6 2.6v1.2M3.2 4l.8.8M2.5 6.8h1.2M3.3 9.6l.8-.7M8.6 4.2l.7-.8"/></g><path d="M6.2 6.3l5.2 2-2.1.8 2 2-1 1-2-2-.8 2.1z" fill="#9a3412"/></svg><div class="a title" style="left:117px;top:680.3px">Manual tests at 10 Jul 2025 13:17</div><div class="a from" style="left:293.6px;top:682.8px">from <b>New test plan1</b></div><div class="a prog" style="top:683.5px"><span>0%</span></div><svg class="a" style="left:989px;top:681.5px" width="14" height="14"><defs><clipPath id="avc688"><circle cx="7" cy="7" r="7"/></clipPath></defs><g clip-path="url(#avc688)"><rect width="14" height="14" fill="#7a6d00"/><path d="M0 0h14v3.5L0 10z" fill="#3fd3f0"/><path d="M.8 9.4L12.2 3.6l1.9 3.6L2.6 13z" fill="#2e2e2e"/><path d="M2.6 9.5l8.9-4.5 1.1 2.1-8.9 4.5z" fill="#cdb99c"/><path d="M7.5 7l2.8-1.4 1 2-2.8 1.4z" fill="#7aa6d8"/></g><circle cx="7" cy="7" r="6.6" fill="none" stroke="#fff" stroke-opacity=".35" stroke-width=".8"/></svg><div class="a dots" style="top:677.0px"></div><svg class="a" style="left:81px;top:711.5px" width="11" height="11"><circle cx="5.5" cy="5.5" r="4.4" fill="#747a86"/><path d="M5.9 3.4a2.1 2.1 0 0 0 0 4.2z" fill="#eef0f3"/></svg><svg class="a" style="left:97px;top:710.5px" width="14" height="14"><rect x="0" y="0" width="13.5" height="13.5" rx="3" fill="#fef3c7"/><g stroke="#ea7a12" stroke-width="1.1" stroke-linecap="round"><path d="M6 2.6v1.2M3.2 4l.8.8M2.5 6.8h1.2M3.3 9.6l.8-.7M8.6 4.2l.7-.8"/></g><path d="M6.2 6.3l5.2 2-2.1.8 2 2-1 1-2-2-.8 2.1z" fill="#9a3412"/></svg><div class="a title" style="left:117px;top:710.3px">Manual tests at 10 Jul 2025 13:16</div><div class="a from" style="left:294.4px;top:712.8px">from <b>param smoke</b></div><div class="a prog" style="top:713.5px"><span>0%</span></div><svg class="a" style="left:989px;top:711.5px" width="14" height="14"><defs><clipPath id="avc718"><circle cx="7" cy="7" r="7"/></clipPath></defs><g clip-path="url(#avc718)"><rect width="14" height="14" fill="#7a6d00"/><path d="M0 0h14v3.5L0 10z" fill="#3fd3f0"/><path d="M.8 9.4L12.2 3.6l1.9 3.6L2.6 13z" fill="#2e2e2e"/><path d="M2.6 9.5l8.9-4.5 1.1 2.1-8.9 4.5z" fill="#cdb99c"/><path d="M7.5 7l2.8-1.4 1 2-2.8 1.4z" fill="#7aa6d8"/></g><circle cx="7" cy="7" r="6.6" fill="none" stroke="#fff" stroke-opacity=".35" stroke-width=".8"/></svg><div class="a dots" style="top:707.0px"></div><div class="a cnt" style="left:425.6px;top:498.0px">67 tests</div><div class="a cnt" style="left:384.2px;top:529.0px">11 tests</div><div class="a cnt" style="left:418px;top:529.0px;color:#3b82f6">1 defects</div><div class="a cnt" style="left:406px;top:559.8px">11 tests</div><div class="a cnt" style="left:415.5px;top:590.6px">11 tests</div><div class="a cnt" style="left:385px;top:652.0px">11 tests</div><div class="a cnt" style="left:384px;top:682.8px">11 tests</div><div class="a cnt" style="left:380px;top:712.8px">16 tests</div>
<svg class="a" style="left:0;top:712px" width="8" height="8"><path d="M0 2.5A5.5 5.5 0 0 0 5.5 8H0z" fill="#000"/></svg>
<svg class="a" style="left:1272px;top:712px" width="8" height="8"><path d="M8 2.5A5.5 5.5 0 0 1 2.5 8H8z" fill="#000"/></svg>
</body></html>
